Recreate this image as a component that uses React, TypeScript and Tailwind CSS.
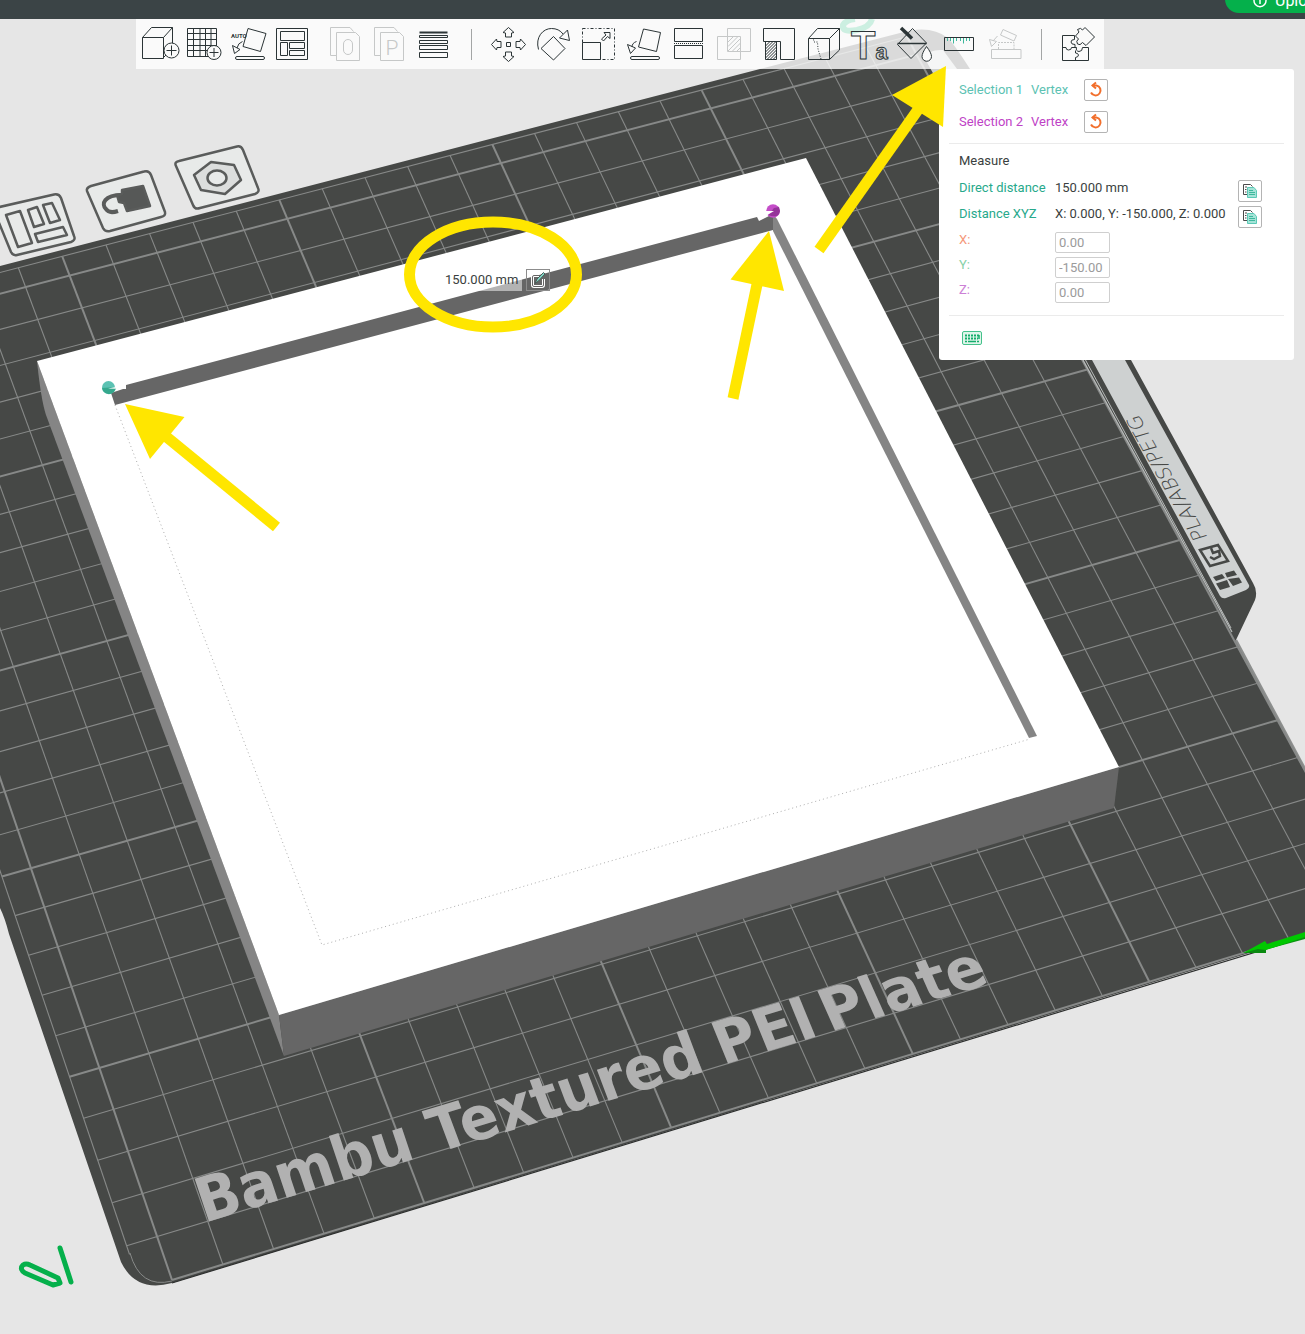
import { useState } from "react";
import type { ReactNode } from "react";

type Tool = { label: string; icon: ReactNode; disabled?: boolean };

// Bed coordinates are in centimetres, origin at the front left corner of the grid
const project = (u: number, v: number) => {
  const w = 1 + 0.0021945 * u + 0.0061952 * v;
  return {
    x: (51.387 * u - 13.911 * v + 172) / w,
    y: (-12.76 * u - 35.798 * v + 1280) / w,
  };
};

const range = (n: number) => Array.from({ length: n }, (_, i) => i);

function GridLine({ from, to, bold }: { from: [number, number]; to: [number, number]; bold?: boolean }) {
  const a = project(...from);
  const b = project(...to);
  return <line x1={a.x} y1={a.y} x2={b.x} y2={b.y} stroke="#878988" strokeWidth={bold ? 2 : 1.1} />;
}

function PlateBadges() {
  return (
    <g fill="#e8eae9" stroke="#5a5c5b" strokeWidth="2.500" strokeLinejoin="round">
      <path d="M-5 208 L54 194.500 Q59 193.500 61 198 L74 236 Q76 240 71 242 L17 255 Q13 256 11 252 L-3 218Z" />
      <path d="M6 215 L20 211 L32 243 L18 247Z M28 210 L37 207 L44 224 L34 227Z M43 205 L52 203 L60 220 L50 223Z M35 234 L63 227 L67 235 L38 242Z" />
      <path d="M91 186 L144 171.500 Q149 170 151 175 L165 212 Q166 216 161 217 L110 231 Q105 232 103 228 L87 191 Q86 188 91 186Z" />
      <path d="M122 195 C104 195 101 204 106 209 Q109 214 118 211" fill="none" strokeWidth="4" />
      <path d="M122 190 L143 186 L150 206 L127 211 L124 203 L119 202 L117 195 L122 194Z" fill="#565857" />
      <path d="M179 161 L237 146.500 Q241 145.500 243 150 L258 188 Q260 192 255 194 L200 208 Q195 210 193 205 L176 166 Q174 162 179 161Z" />
      <path d="M194 175 L211 162 L234 165 L241 180 L225 194 L201 190Z" fill="#dcdedd" />
      <ellipse cx="217" cy="178" rx="9.500" ry="7.500" />
    </g>
  );
}

function MaterialTab() {
  return (
    <g>
      <path d="M924 57 Q930 49 943 50 L957 69 L1125 360 L1249 585 Q1250 588 1246 590 L1226 598 Q1222 599 1220 596 L1092 360Z" fill="#ced1d1" />
      <path d="M1083 360 L1232 632" stroke="#b9bcbb" strokeWidth="1.200" fill="none" />
      <path d="M1085.500 360 L1231 628" stroke="#b9bcbb" strokeWidth="1" fill="none" />
      <text
        transform="matrix(-0.49 -0.87 0.95 -0.28 1208 538)"
        fontFamily="DejaVu Sans"
        fontSize="20"
        fontWeight="200"
        fill="#464846"
      >
        PLA/ABS/PETG
      </text>
      <g fill="none" stroke="#464846" strokeWidth="2.500">
        <path d="M1200 550 L1218 545 L1228 561 L1210 566Z" />
        <path d="M1211 548 L1213 553 L1219 551 L1220 556 L1214 559 L1210 557" />
      </g>
      <g fill="#464846">
        <path d="M1213 577 L1222 574 L1225 578 L1216 581Z M1225 573 L1234 570.500 L1237 575 L1227 577.500Z M1216 583.500 L1227 580 L1230 587 L1220 590Z M1228 579 L1239 577.500 L1242 582.500 L1233 586Z" />
      </g>
    </g>
  );
}

function Scene() {
  const words = [
    { text: "Bambu", size: 57, transform: "matrix(0.957 -0.291 0.345 1.03 204 1223)" },
    { text: "Textured", size: 57, transform: "matrix(0.957 -0.291 0.375 1 437 1153)" },
    { text: "PEI", size: 57, transform: "matrix(0.957 -0.291 0.4 0.98 723 1065)" },
    { text: "Plate", size: 58, transform: "matrix(0.957 -0.291 0.42 0.94 830 1032)" },
  ];
  return (
    <svg
      className="absolute inset-0 h-full w-full"
      viewBox="0 0 1305 1334"
      preserveAspectRatio="xMinYMin slice"
      role="img"
      aria-label="Print bed with a square frame model"
    >
      <PlateBadges />

      {/* Plate with its handle tab */}
      <path
        d="M-10 268.500 L0 266 L760 69 L900 33 Q930 24 948 38 Q954 44 970 69 L1131 360 L1253 583 Q1258 591 1255 600 L1236 640 L1305 769 V936 L172 1283 Q136 1293 121 1262 L9 934 Q5 918 0 908Z"
        fill="#464846"
      />
      <path d="M1236 640 L1305 769" stroke="#8d8f8e" strokeWidth="2.500" />
      <path d="M172 1283 L1305 937" stroke="#2d2f2e" strokeWidth="1.200" fill="none" />
      {range(26).map((u) => (
        <GridLine key={`u${u}`} from={[u, 0]} to={[u, 25.6]} bold={u % 5 === 0} />
      ))}
      {range(26).map((v) => (
        <GridLine key={`v${v}`} from={[v === 0 ? 0 : -0.6, v]} to={[25, v]} bold={v % 5 === 0} />
      ))}
      <GridLine from={[-0.6, 25.6]} to={[25, 25.6]} />
      <GridLine from={[-0.6, 0.8]} to={[-0.6, 25.6]} />
      <path d="M130 1253 Q140 1289 172 1281" stroke="#878988" fill="none" />
      <MaterialTab />

      <g fill="#b1b1b1" fontFamily="DejaVu Sans" fontWeight="bold">
        {words.map((w) => (
          <text key={w.text} transform={w.transform} fontSize={w.size}>
            {w.text}
          </text>
        ))}
      </g>

      {/* Frame model */}
      <path d="M37 361 L279 1015 L284 1056 L46 415 Q41 400 37 361Z" fill="#858585" />
      <path d="M279 1015 L1119 767 L1114 808 L284 1056Z" fill="#666666" />
      <path d="M37 361 L806 158 L1119 767 L279 1015Z" fill="#ffffff" />
      <path d="M126 385 L757 217 L759 221 L773 214 L773 230 L115 405 L111 393 L126 388Z" fill="#666666" />
      <path d="M773 214 L777 219 L1037 736 L1029 738 L773 231Z" fill="#858585" />
      <path d="M115 405 L322 945 L1030 739" fill="none" stroke="#adadad" strokeDasharray="1 3" />

      {/* Picked vertices */}
      <circle cx="108.500" cy="387.500" r="6.500" fill="#5cc2b3" />
      <path d="M102 388 L117 387 L114 392 Q108 397 103 391Z" fill="#35a88d" />
      <path d="M108 388.500 L126 385 V389Z" fill="#ffffff" />
      <circle cx="773" cy="211" r="6.800" fill="#c44dc8" />
      <path d="M780 211 Q779 219 768 215 L774 208 L779 207Z" fill="#95349a" />
      <path d="M766 211 L774 211 L769 214 L760 220Z" fill="#ffffff" />

      {/* Axis and plate markers */}
      <path d="M1260 949 L1305 937" stroke="#0a9410" strokeWidth="4" />
      <path d="M1243 953 L1265 941 L1267 944 L1305 932 V937 L1266 950Z" fill="#00c800" />
      <path d="M1243 953 L1258 949 L1266 950 V953Z" fill="#0a8a10" />
      <g fill="none" stroke="#05b04b" strokeWidth="5" strokeLinecap="round" strokeLinejoin="round">
        <path d="M60 1248 L71 1282" />
        <path d="M30 1265 L58 1278 L60 1283 L53 1285 L25 1273 Q19 1269 23 1265 Q26 1263 30 1265Z" />
      </g>
      <path
        d="M872 19 Q870 27 857 30 Q842 33 843 25 Q846 20 855 19"
        fill="none"
        stroke="#00ad68"
        strokeWidth="6"
      />
    </svg>
  );
}

function Annotations() {
  return (
    <svg
      className="pointer-events-none absolute inset-0 h-full w-full"
      viewBox="0 0 1305 1334"
      preserveAspectRatio="xMinYMin slice"
      aria-hidden="true"
    >
      <g fill="none" stroke="#ffe600" strokeWidth="11">
        <ellipse cx="493" cy="274.500" rx="83.500" ry="52.500" />
        <path d="M163 434 L276.500 527" />
        <path d="M759 275 L733 398.500" />
        <path d="M922 104 L819 250" />
      </g>
      <g fill="#ffe600">
        <path d="M125 404 L184.500 417 L150 459Z" />
        <path d="M769 231 L730.500 279.500 L784 291Z" />
        <path d="M946 66 L892 95 L943 127Z" />
      </g>
    </svg>
  );
}

const viewTools: Tool[] = [
  {
    label: "Add object",
    icon: (
      <>
        <path d="M4.500 18.500H25.500V39.500H4.500Z M4.500 18.500L13.500 8.500H34.500L25.500 18.500 M34.500 8.500V24 M25 39L28 36" />
        <circle cx="33.500" cy="31.500" r="7.500" fill="#fafafa" />
        <path d="M33.500 26.500V36.500M28.500 31.500H38.500" />
      </>
    ),
  },
  {
    label: "Add plate",
    icon: (
      <>
        <path d="M5.500 9.500H34.500V37.500H5.500Z M11.500 9.500V37.500M18 9.500V37.500M23.500 9.500V37.500M29 9.500V37.500 M5.500 14.500H34.500M5.500 20.500H34.500M5.500 26.500H34.500M5.500 31.500H34.500" />
        <circle cx="32" cy="33.500" r="7" fill="#fafafa" />
        <path d="M32 29V38M27.500 33.500H36.500" />
      </>
    ),
  },
  {
    label: "Auto orient",
    icon: (
      <>
        <path d="M22 9.500L40 14.500L34.500 32.500L17 27.500Z M16.500 22.500Q12 24 11 29 M6.500 26.500L14 30.500L8.500 34.500Z" />
        <rect x="9.500" y="37.500" width="29" height="3" rx="1.500" />
        <text x="5" y="18.500" fontSize="6" fontWeight="bold" fontFamily="Roboto" stroke="none" fill="#2b3436">
          AUTO
        </text>
      </>
    ),
  },
  {
    label: "Arrange",
    icon: (
      <path d="M6.500 9.500H37.500V40.500H6.500Z M10.500 12.500H34.500V21.500H10.500Z M10.500 23.500H17.500V36.500H10.500Z M19.500 23.500H34.500V29.500H19.500Z M19.500 31.500H34.500V36.500H19.500Z" />
    ),
  },
];

const splitTools: Tool[] = [
  {
    label: "Split to objects",
    disabled: true,
    icon: (
      <>
        <path d="M13.500 36.500H7.500V8.500H27L30.500 12.500 M13.500 13.500H32.500L36.500 17.500V41.500H13.500Z" />
        <rect x="20.500" y="20.500" width="9" height="15" rx="4.500" />
      </>
    ),
  },
  {
    label: "Split to parts",
    disabled: true,
    icon: (
      <>
        <path d="M13.500 36.500H7.500V8.500H27L30.500 12.500 M13.500 13.500H32.500L36.500 17.500V41.500H13.500Z" />
        <text x="25" y="36" fontSize="21" fontWeight="300" fontFamily="Roboto" textAnchor="middle" stroke="none" fill="#c6c8c8">
          P
        </text>
      </>
    ),
  },
  {
    label: "Variable layer height",
    icon: (
      <>
        <path d="M8.500 13.500H36.500" strokeWidth="2" />
        <path d="M8.500 16.500H36.500V18.500H8.500Z M8.500 21.500H36.500V24.500H8.500Z M8.500 26.500H36.500V30.500H8.500Z M8.500 33.500H36.500V38.500H8.500Z" />
      </>
    ),
  },
];

const arrowUp = "M22.500 8.500L28 13.500L25.500 14V18H19.500V14L17 13.500Z";

const editTools: Tool[] = [
  {
    label: "Move",
    icon: (
      <>
        <path d="M20.500 23.500H24.500V27.500H20.500Z" />
        {range(4).map((i) => (
          <path key={i} d={arrowUp} transform={`rotate(${i * 90} 22.500 25.500)`} />
        ))}
      </>
    ),
  },
  {
    label: "Rotate",
    icon: (
      <path d="M22.500 17.500L34 29.500L22.500 41L10 29.500Z M7.500 30.500C4 18 12 9.500 20.500 9.500Q28 9.500 32 15 M36.500 11L28.500 19L38.500 21.500Z" />
    ),
  },
  {
    label: "Scale",
    icon: (
      <>
        <path d="M6.500 9.500H38.500V40.500H6.500Z" strokeDasharray="3 2 1 2" />
        <path d="M6.500 23.500H24.500V40.500H6.500Z" />
        <path d="M34 13.500V19.500L31.500 17.500L27.500 22L25.500 20L30 16L28 13.500Z" />
      </>
    ),
  },
  {
    label: "Lay on face",
    icon: (
      <>
        <path d="M22.500 10L39.500 13.500L35.500 32.500L17.500 28Z M15.500 22.500Q11 24 11 28 M6.500 25.500L14.500 29L9.500 34.500Z" />
        <rect x="9.500" y="37.500" width="29" height="3" rx="1.500" />
      </>
    ),
  },
  {
    label: "Cut",
    icon: (
      <>
        <path d="M8.500 9.500H36.500V22.500H8.500Z M8.500 26.500H36.500V39.500H8.500Z" />
        <path d="M8 24.500H37" strokeDasharray="1 1" />
      </>
    ),
  },
  {
    label: "Mesh boolean",
    disabled: true,
    icon: (
      <path d="M16.500 9.500H39.500V32.500H16.500Z M6.500 17.500H29.500V40.500H6.500Z M17 23L22.500 17.500M17 27.500L27 17.500M17 32L29.500 19.500M21 32.500L29.500 24M25.500 32.500L29.500 28.500" />
    ),
  },
  {
    label: "Support painting",
    icon: (
      <path d="M7.500 9.500H38.500V40.500H24.500V22.500H7.500Z M9.500 22.500H20.500V40.500H9.500Z M9.500 27L14 22.500M9.500 30L17 22.500M9.500 33L20 22.500M9.500 36L20.500 25M9.500 39L20.500 28M11 40.500L20.500 31M14 40.500L20.500 34M17 40.500L20.500 37" />
    ),
  },
  {
    label: "Seam painting",
    icon: (
      <>
        <path d="M7.500 19.500H28.500V40.500H7.500Z M7.500 19.500L16.500 9.500H38.500L28.500 19.500 M38.500 9.500V31L28.500 40.500" />
        <path d="M12.500 20.500L13 23H16.500L17 30L20 40" strokeDasharray="1 1.500" />
      </>
    ),
  },
  {
    label: "Text shape",
    icon: (
      <text x="5" y="40" fontFamily="Liberation Sans" fontSize="40" fontWeight="bold" textRendering="geometricPrecision">
        T<tspan fontSize="22">a</tspan>
      </text>
    ),
  },
  {
    label: "Color painting",
    icon: (
      <>
        <path d="M21.500 9.500L35.500 24L20 39.500L6.500 25.500Z" />
        <path d="M6.500 24.500H35.500" strokeWidth="1.500" />
        <path d="M10 9L21 19.500" strokeWidth="3.500" />
        <path d="M35.500 27.500Q31 34 31 37.500A4.700 4.700 0 0 0 40.500 37.500Q40.500 34 35.500 27.500Z" fill="#fafafa" />
      </>
    ),
  },
  {
    label: "Measure",
    icon: (
      <>
        <path d="M11.500 19V22M14.500 19V22M17.500 19V24.500M20.500 19V22M24.500 19V22M27.500 19V24.500M30.500 19V22M33.500 19V22" stroke="#3db89c" />
        <path d="M8.500 18.500H37.500V31.500H8.500Z" />
      </>
    ),
  },
  {
    label: "Assemble",
    disabled: true,
    icon: (
      <>
        <path d="M10.500 30.500H40V39.500H10.500Z M22 10.500L35.500 16.500L33 22L19.500 16Z M8.500 20.500L15.500 22.500L10.500 27.500Z M16.500 17L12 22" />
        <path d="M17.500 30V23.500H33V30" strokeDasharray="2 1" />
      </>
    ),
  },
];

const assembly: Tool = {
  label: "Assembly view",
  icon: (
    <>
      <path d="M18.500 16.500H6.500V41.500H32.500V28.500H26.500Q26.500 32.500 23 32.500Q19.500 32 20.500 28.500H15.500Q15.500 31 12.500 31Q10 31 10 28.500H6.500" />
      <path d="M18.500 16.500V20.500Q15 20.500 15 23Q15 25.500 19 25.500V28.500 M19.500 41.500V38.500Q22.500 38 22.500 36Q22 34 19.500 34V31.500" />
      <path d="M29 8.500L38.500 18L30 26.500L26.500 23.500Q24 27 21.500 25Q19.500 22 22.500 20L19.500 17L23 13L21.500 10.500Q25 8 26.500 11Z" />
    </>
  ),
};

function ToolButton({ tool, className }: { tool: Tool; className: string }) {
  return (
    <button
      type="button"
      title={tool.label}
      aria-label={tool.label}
      disabled={tool.disabled}
      className={`h-[50px] shrink-0 hover:bg-black/5 disabled:hover:bg-transparent ${className}`}
    >
      <svg width="44" height="50" viewBox="0 0 44 50" fill="none" stroke={tool.disabled ? "#c6c8c8" : "#2b3436"}>
        {tool.icon}
      </svg>
    </button>
  );
}

function Toolbar() {
  return (
    <nav aria-label="Tools" className="relative ml-34 flex h-[50px] w-fit items-center bg-white/80 pr-1 pl-[2px]">
      {viewTools.map((t) => (
        <ToolButton key={t.label} tool={t} className="w-11" />
      ))}
      <div className="w-[9px]" />
      {splitTools.map((t) => (
        <ToolButton key={t.label} tool={t} className="w-11" />
      ))}
      <div className="mr-[14px] ml-4 h-[31px] w-px bg-[#a3a5a5]" />
      {editTools.map((t) => (
        <ToolButton key={t.label} tool={t} className="w-[45px]" />
      ))}
      <div className="mr-[14px] ml-[15px] h-[31px] w-px bg-[#a3a5a5]" />
      <ToolButton tool={assembly} className="w-11" />
    </nav>
  );
}

function IconButton({ label, children, className = "" }: { label: string; children: ReactNode; className?: string }) {
  return (
    <button
      type="button"
      aria-label={label}
      className={`flex h-[22px] w-6 shrink-0 items-center justify-center rounded-[2px] border border-[#b4b4b4] ${className}`}
    >
      {children}
    </button>
  );
}

function ResetIcon() {
  return (
    <svg width="16" height="18" viewBox="0 0 16 18" fill="none" stroke="#f26f2c" strokeWidth="2">
      <path d="M4.500 4.500H8.500A5 5 0 1 1 3 11.500" />
      <path d="M8 1.500L4.500 4.500L8 7.500" />
    </svg>
  );
}

function CopyIcon() {
  return (
    <svg width="16" height="16" viewBox="0 0 16 16" fill="none">
      <path d="M5 11.500H1.500V1.500H8.500L10.500 3.500" stroke="#4a4a4a" />
      <path d="M3 4H5M3 6.500H4.500M3 9H4.500" stroke="#4a4a4a" />
      <path d="M5.500 4.500H12L14.500 7.500V14.500H5.500Z" fill="#a5e3d7" stroke="#5cc9b6" />
      <path d="M7 7.500H11M7 9.500H13M7 11.500H13" stroke="#3db89c" />
    </svg>
  );
}

const selections = [
  { name: "Selection 1", feature: "Vertex", color: "text-[#5cc2b3]" },
  { name: "Selection 2", feature: "Vertex", color: "text-[#be42c6]" },
];

const distances = [
  { name: "Direct distance", value: "150.000 mm" },
  { name: "Distance XYZ", value: "X: 0.000, Y: -150.000, Z: 0.000" },
];

const axes = [
  { axis: "X", color: "text-[#f5987a]" },
  { axis: "Y", color: "text-[#86d1a8]" },
  { axis: "Z", color: "text-[#cc80d6]" },
] as const;

function MeasurePanel() {
  const [offsets, setOffsets] = useState({ X: "0.00", Y: "-150.00", Z: "0.00" });

  return (
    <section
      aria-label="Measure"
      className="relative mr-[11px] ml-auto w-[355px] rounded-[3px] bg-white px-[10px] pt-[10px] text-[13px] leading-5 text-[#3a3f40]"
    >
      <div className="flex flex-col gap-[10px] px-[10px] pb-[10px]">
        {selections.map((s) => (
          <div key={s.name} className={`flex h-[22px] items-center ${s.color}`}>
            <span className="w-[72px]">{s.name}</span>
            <span className="w-[53px]">{s.feature}</span>
            <IconButton label={`Reset ${s.name}`}>
              <ResetIcon />
            </IconButton>
          </div>
        ))}
      </div>

      <div className="border-y border-[#ebebeb] px-[10px] pt-[7px] pb-[10px]">
        <h2 className="mb-[5px]">Measure</h2>
        {distances.map((d) => (
          <div key={d.name} className="flex h-[26px] items-start">
            <span className="mt-[2px] w-24 whitespace-nowrap text-[#27a98b]">{d.name}</span>
            <span className="mt-[2px] flex-1 whitespace-nowrap">{d.value}</span>
            <IconButton label={`Copy ${d.name}`} className="mr-3 self-end">
              <CopyIcon />
            </IconButton>
          </div>
        ))}
        <div className="mt-[2px]">
          {axes.map(({ axis, color }) => (
            <div key={axis} className="flex h-[25px] items-start">
              <label htmlFor={`offset-${axis}`} className={`w-24 ${color}`}>
                {axis}:
              </label>
              <input
                id={`offset-${axis}`}
                value={offsets[axis]}
                onChange={(e) => setOffsets({ ...offsets, [axis]: e.target.value })}
                className="mt-[2px] h-[21px] w-[55px] rounded-[2px] border border-[#cfcfcf] px-[3px] text-[#9b9b9b]"
              />
            </div>
          ))}
        </div>
      </div>

      <div className="px-3 py-[15px]">
        <button type="button" aria-label="Keyboard shortcuts" className="block">
          <svg width="22" height="14" viewBox="0 0 22 14" fill="none" stroke="#14ad6b">
            <rect x="1.500" y="0.500" width="19" height="13" rx="1.500" fill="#dff5ea" stroke="#45c18b" />
            <path d="M4 4.500H18.500M4 7.500H17" strokeWidth="2" strokeDasharray="2 1" />
            <path d="M4 10.500H6M7 10.500H15M16 10.500H18M18 4V8" strokeWidth="1.500" />
          </svg>
        </button>
      </div>
    </section>
  );
}

export default function App() {
  return (
    <div className="relative min-h-screen overflow-hidden bg-[#e6e6e6] font-['Roboto',sans-serif]">
      <Scene />

      <header className="relative flex h-[19px] items-end justify-end overflow-hidden bg-[#3b4446]">
        <button
          type="button"
          className="-mr-10 mb-[6px] flex h-7 w-30 shrink-0 items-center gap-2 rounded-full bg-[#05b04b] pt-1 pl-7 text-base leading-5 text-white"
        >
          <svg width="14" height="14" viewBox="0 0 14 14" fill="none" stroke="currentColor" strokeWidth="1.500">
            <path d="M4 1.500A6 6 0 1 0 10 1.500" />
            <path d="M7 10V2M4.500 4.500L7 2L9.500 4.500" />
          </svg>
          Upload
        </button>
      </header>

      <Toolbar />
      <MeasurePanel />

      {/* Dimension label floating over the model */}
      <div className="absolute top-[269px] left-[440px] flex h-[22px] items-center gap-1">
        <span className="flex h-[22px] w-[82px] items-center bg-white/50 pl-[5px] text-[13px] whitespace-nowrap text-[#3a3f40]">
          150.000 mm
        </span>
        <button type="button" aria-label="Edit distance" className="flex h-[22px] w-6 items-center justify-center border border-[#8c8c8c]">
          <svg width="18" height="18" viewBox="0 0 18 18" fill="none">
            <path d="M10 4.500H5Q3.500 4.500 3.500 6V14Q3.500 15.500 5 15.500H13Q14.500 15.500 14.500 14V8" stroke="#ffffff" strokeWidth="3" />
            <path d="M10 4.500H5Q3.500 4.500 3.500 6V14Q3.500 15.500 5 15.500H13Q14.500 15.500 14.500 14V8" stroke="#666666" />
            <path d="M6 12.500L8 8L14.500 1.500L16 3L9.500 10Z" fill="#7fd3c2" stroke="#4a5a57" />
          </svg>
        </button>
      </div>

      <Annotations />
    </div>
  );
}
